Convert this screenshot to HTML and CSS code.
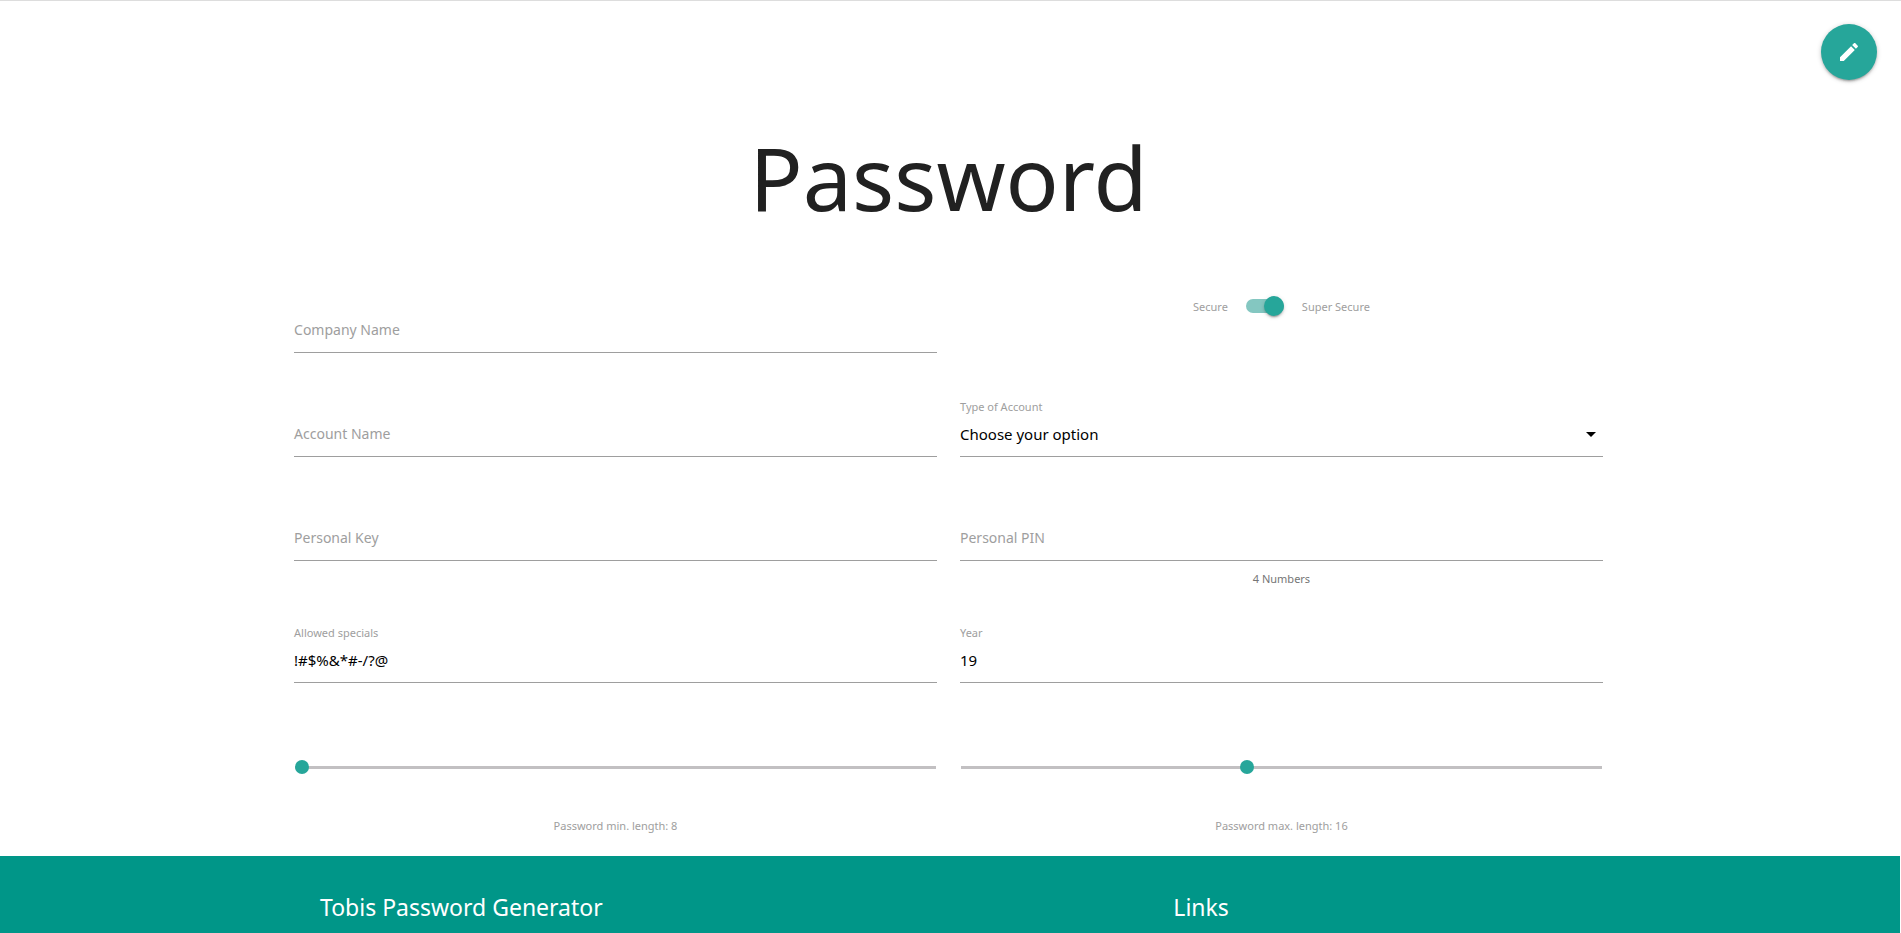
FILE: index.html
```html
<!DOCTYPE html>
<html lang="en">
<head>
<meta charset="utf-8">
<title>Tobis Password Generator</title>
<meta name="viewport" content="width=device-width, initial-scale=1">
<link rel="stylesheet" href="styles.css">
</head>
<body>
<button class="fab" type="button" aria-label="Edit">
  <svg viewBox="0 0 24 24" width="24" height="24" aria-hidden="true"><path d="M3 17.25V21h3.75L17.81 9.94l-3.75-3.75L3 17.25zM20.71 7.04c.39-.39.39-1.02 0-1.41l-2.34-2.34c-.39-.39-1.02-.39-1.41 0l-1.83 1.83 3.75 3.75 1.83-1.83z"/></svg>
</button>
<main class="page">
  <h1 class="title">Password</h1>
  <form class="form">
    <div class="field field--empty">
      <label for="company">Company Name</label>
      <input id="company" type="text">
    </div>
    <label class="switch">
      <span>Secure</span>
      <input type="checkbox" checked>
      <span>Super Secure</span>
    </label>

    <div class="field field--empty">
      <label for="account">Account Name</label>
      <input id="account" type="text">
    </div>
    <div class="field">
      <label for="type">Type of Account</label>
      <select id="type"><option>Choose your option</option></select>
      <svg class="caret" viewBox="0 0 10 5" width="10" height="5" aria-hidden="true"><path d="M0 0h10L5 5z"/></svg>
    </div>

    <div class="field field--empty">
      <label for="key">Personal Key</label>
      <input id="key" type="text">
    </div>
    <div class="field field--empty">
      <label for="pin">Personal PIN</label>
      <input id="pin" type="text" aria-describedby="pin-help">
      <span class="helper" id="pin-help">4 Numbers</span>
    </div>

    <div class="field">
      <label for="specials">Allowed specials</label>
      <input id="specials" type="text" value="!#$%&amp;*#-/?@">
    </div>
    <div class="field">
      <label for="year">Year</label>
      <input id="year" type="text" value="19">
    </div>

    <div class="range">
      <input id="min" type="range" min="8" max="26" value="8">
      <label for="min">Password min. length: 8</label>
    </div>
    <div class="range">
      <input id="max" type="range" min="8" max="26" value="16">
      <label for="max">Password max. length: 16</label>
    </div>
  </form>
</main>
<footer class="footer">
  <div class="footer__row">
    <h2>Tobis Password Generator</h2>
    <h2>Links</h2>
  </div>
</footer>
</body>
</html>
```
FILE: styles.css
```css
* {
  box-sizing: border-box;
}

body {
  margin: 0;
  padding-right: 1px;
  border-top: 1px solid #dddddd;
  background: #ffffff;
  color: #212121;
  font-family: "Segoe UI", "Noto Sans", "Open Sans", sans-serif;
  font-size: 15px;
}

.fab {
  position: absolute;
  top: 24px;
  right: 24px;
  display: grid;
  place-items: center;
  width: 56px;
  height: 56px;
  padding: 0;
  border: 0;
  border-radius: 50%;
  background: #26a69a;
  box-shadow: 0 2px 2px rgba(0, 0, 0, 0.14), 0 3px 1px -2px rgba(0, 0, 0, 0.12), 0 1px 5px rgba(0, 0, 0, 0.2);
  cursor: pointer;
}

.fab svg {
  fill: #ffffff;
}

.page {
  padding: 120px 3px 0 0;
}

.title {
  margin: 0;
  font-size: 88px;
  font-weight: 400;
  line-height: 112px;
  text-align: center;
}

.form {
  display: grid;
  grid-template-columns: 1fr 1fr;
  gap: 32px 23px;
  width: 69%;
  margin: 60px auto 0;
}

.field {
  display: grid;
  grid-template-rows: 20px 40px auto;
  align-content: start;
  padding-bottom: 12px;
}

.field label {
  grid-area: 1 / 1;
  color: #9e9e9e;
  font-size: 11px;
  line-height: 20px;
}

.field input,
.field select {
  grid-area: 2 / 1;
  width: 100%;
  min-width: 0;
  margin: 0;
  padding: 0 0 6px;
  border: 0;
  border-bottom: 1px solid #9e9e9e;
  border-radius: 0;
  outline: 0;
  appearance: none;
  background: transparent;
  color: #000000;
  font: inherit;
}

.field--empty label {
  grid-area: 2 / 1;
  font-size: 14px;
  line-height: 34px;
}

.field:has(.helper) {
  padding-bottom: 0;
}

.helper {
  grid-area: 3 / 1;
  padding: 8px 0 2px;
  color: #757575;
  font-size: 11px;
  line-height: 20px;
  text-align: center;
}

.caret {
  grid-area: 2 / 1;
  place-self: center end;
  margin: 0 7px 6px 0;
  pointer-events: none;
}

.switch {
  display: flex;
  align-items: center;
  align-self: start;
  justify-content: center;
  gap: 18px;
  height: 26px;
  color: #9e9e9e;
  font-size: 11px;
}

.switch input {
  display: flex;
  align-items: center;
  justify-content: flex-end;
  width: 38px;
  height: 14px;
  margin: 0;
  border-radius: 8px;
  appearance: none;
  background: #84c7c1;
}

.switch input::before {
  content: "";
  flex: none;
  width: 20px;
  height: 20px;
  border-radius: 50%;
  background: #26a69a;
  box-shadow: 0 3px 1px -2px rgba(0, 0, 0, 0.2), 0 2px 2px rgba(0, 0, 0, 0.14), 0 1px 5px rgba(0, 0, 0, 0.12);
}

.switch input:not(:checked) {
  justify-content: flex-start;
}

.range {
  display: flex;
  flex-direction: column;
  padding: 33px 1px 20px;
}

.range input {
  width: 100%;
  height: 14px;
  margin: 0 0 42px;
  appearance: none;
  background: transparent;
}

.range input::-webkit-slider-runnable-track {
  height: 3px;
  background: #c2c0c2;
}

.range input::-webkit-slider-thumb {
  width: 14px;
  height: 14px;
  margin-top: -6px;
  border-radius: 50%;
  appearance: none;
  background: #26a69a;
}

.range label {
  color: #9e9e9e;
  font-size: 11px;
  line-height: 20px;
  text-align: center;
}

.footer {
  padding: 35px 0 11px;
  background: #009688;
  color: #ffffff;
}

.footer__row {
  display: grid;
  grid-template-columns: 2fr 1fr;
  max-width: 1280px;
  margin: 0 auto;
}

.footer h2 {
  margin: 0;
  padding: 0 10px;
  font-size: 23px;
  font-weight: 400;
  line-height: 32px;
}
```
